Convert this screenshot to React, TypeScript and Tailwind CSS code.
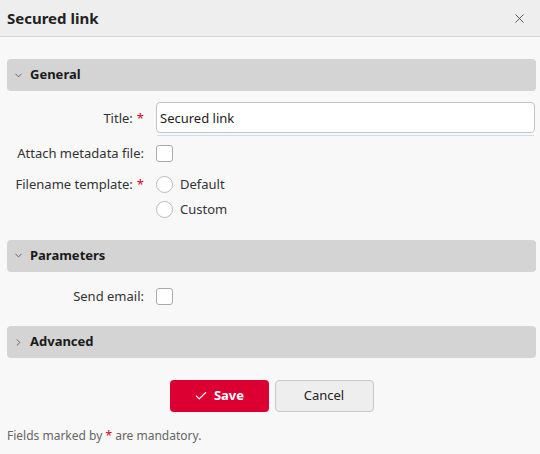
import { Check, ChevronDown, ChevronRight, X } from "lucide-react";

function SectionBar({ label, open }: { label: string; open: boolean }) {
  return (
    <div className="flex h-[32px] items-center gap-[6px] rounded-[4px] bg-[#d4d4d4] px-[6px] text-[13px] font-bold text-[#1a1a1a]">
      {open ? (
        <ChevronDown size={11} strokeWidth={1.5} className="text-[#333]" />
      ) : (
        <ChevronRight size={11} strokeWidth={1.5} className="text-[#333]" />
      )}
      <span>{label}</span>
    </div>
  );
}

function Row({ label, required, children }: { label: string; required?: boolean; children: React.ReactNode }) {
  return (
    <div className="flex items-center">
      <div className="w-[149px] shrink-0 pr-[12px] text-right text-[13px] text-[#333]">
        {label}
        {required && <span className="ml-[4px] text-[#d0021b]">*</span>}
      </div>
      <div className="flex-1">{children}</div>
    </div>
  );
}

function Box() {
  return <div className="h-[17px] w-[17px] rounded-[3px] border border-[#aaa] bg-white" />;
}

function Radio({ label }: { label: string }) {
  return (
    <div className="flex items-center gap-[7px]">
      <div className="h-[17px] w-[17px] rounded-full border border-[#bbb] bg-white" />
      <span className="text-[13px] text-[#333]">{label}</span>
    </div>
  );
}

export default function App() {
  return (
    <div className="flex h-[454px] w-[540px] flex-col bg-[#f8f8f8] font-['Noto_Sans',sans-serif]">
      <div className="flex h-[37px] shrink-0 items-center justify-between border-b border-[#d6d6d6] bg-[#eeeeee] pl-[7px] pr-[13px]">
        <span className="text-[15px] font-bold text-[#222]">Secured link</span>
        <X size={15} strokeWidth={1.4} className="text-[#444]" />
      </div>

      <div className="flex flex-col pl-[7px] pr-[4px] pt-[22px]">
        <SectionBar label="General" open />

        <div className="mt-[11px] flex flex-col">
          <Row label="Title:" required>
            <div className="pr-px">
              <input
                defaultValue="Secured link"
                className="h-[31px] w-full rounded-[4px] border border-[#c4c4c4] bg-white px-[3px] text-[13px] text-[#222] outline-none"
              />
              <div className="mx-[1px] mt-[2px] h-px bg-[#bfe3ef]" />
            </div>
          </Row>
          <div className="mt-[8px]">
            <Row label="Attach metadata file:">
              <Box />
            </Row>
          </div>
          <div className="mt-[11px]">
            <Row label="Filename template:" required>
              <Radio label="Default" />
            </Row>
          </div>
          <div className="mt-[6px] pl-[149px]">
            <Radio label="Custom" />
          </div>
        </div>

        <div className="mt-[20px]">
          <SectionBar label="Parameters" open />
        </div>
        <div className="mt-[15px]">
          <Row label="Send email:">
            <Box />
          </Row>
        </div>

        <div className="mt-[20px]">
          <SectionBar label="Advanced" open={false} />
        </div>

        <div className="mt-[22px] flex justify-center gap-[6px]">
          <button className="flex h-[32px] w-[99px] items-center justify-center gap-[6px] rounded-[4px] bg-[#dc0032] text-[13px] font-bold text-white">
            <Check size={14} strokeWidth={2} />
            Save
          </button>
          <button className="h-[32px] w-[99px] rounded-[4px] border border-[#c8c8c8] bg-[#eeeeee] text-[13px] text-[#222]">
            Cancel
          </button>
        </div>

        <div className="mt-[15px] text-[12px] text-[#666]">
          Fields marked by <span className="font-normal text-[#d0021b]">*</span> are mandatory.
        </div>
      </div>
    </div>
  );
}
